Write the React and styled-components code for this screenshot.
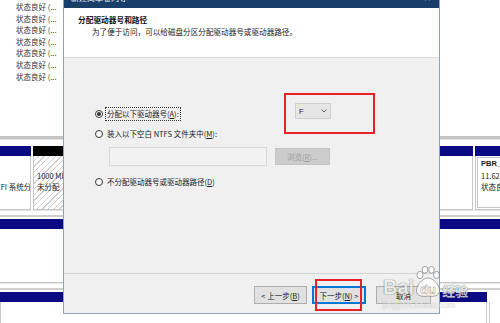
import React from 'react'
import styled, { createGlobalStyle } from 'styled-components'

const NAVY = '#0a0a82'

const GlobalStyle = createGlobalStyle`
  html, body { margin: 0; padding: 0; background: #fff; }
  body { font-family: "Noto Sans CJK SC", "Noto Sans", sans-serif; }
`

const Screen = styled.div`
  position: relative;
  width: 500px;
  height: 323px;
  overflow: hidden;
  background: #fff;
  font-family: "Noto Sans CJK SC", "Liberation Sans", sans-serif;
  font-size: 7.5px;
  color: #222;
`

/* disk management window behind the wizard */
const Backdrop = styled.div`
  display: flex;
  flex-direction: column;
  & > * { flex-shrink: 0; }
`

const VolumeList = styled.div`
  box-sizing: border-box;
  height: 136px;
  padding: 1px 0 0 16px;
  display: flex;
  flex-direction: column;
`

const StatusCell = styled.div`
  height: 11.6px;
  line-height: 11.6px;
  white-space: nowrap;
  color: #333;
`

const Splitter = styled.div`
  height: 3px;
  background: #c4c4c4;
  border-bottom: 1px solid #e2e2e2;
  margin-bottom: 6px;
`

const DiskRow = styled.div`
  display: flex;
  gap: 2px;
  height: 64px;
  overflow: hidden;
`

const DiskGap = styled.div`
  height: ${p => p.h}px;
  background: #fff;
  border-top: 1px solid #e4e4e4;
  border-bottom: 2px solid #d0d0d0;
  box-sizing: border-box;
  margin-bottom: 2px;
`

const Partition = styled.div`
  flex: 0 0 ${p => p.w}px;
  margin-left: ${p => p.offset || 0}px;
  display: flex;
  flex-direction: column;
  min-width: 0;
`

const PartHeader = styled.div`
  height: 10px;
  background: ${p => p.color};
`

const PartBody = styled.div`
  flex: 1;
  box-sizing: border-box;
  overflow: hidden;
  padding: 2px 3px;
  border: 1px solid #c6c6c6;
  border-top: none;
  background: ${p => p.hatched
    ? 'repeating-linear-gradient(135deg, #fff 0 3px, #cfcfcf 3px 4px)'
    : '#fff'};
  box-shadow: ${p => p.framed ? 'inset 0 0 0 1px #fff, inset 0 0 0 2px #c6c6c6' : 'none'};
  padding-left: ${p => p.framed ? 5 : 3}px;
`

const PartLine = styled.div`
  height: 11.5px;
  line-height: 11.5px;
  white-space: nowrap;
  font-weight: ${p => p.bold ? 700 : 400};
  font-family: ${p => p.bold ? '"Liberation Sans", sans-serif' : 'inherit'};
  color: #222;
`

/* wizard dialog */
const Dialog = styled.section`
  position: absolute;
  left: 63px;
  top: -14px;
  width: 377px;
  height: 328px;
  box-sizing: border-box;
  border: 1px solid #8ea2b8;
  background: #f0f0f0;
  display: flex;
  flex-direction: column;
`

const TitleBar = styled.div`
  height: 21px;
  flex-shrink: 0;
  background: #183f6a;
  color: #fff;
  display: flex;
  align-items: flex-end;
  justify-content: space-between;
  padding: 0 8px 5px 7px;
  box-sizing: border-box;
  font-size: 8px;
  line-height: 10px;
`

const Header = styled.div`
  height: 50px;
  flex-shrink: 0;
  box-sizing: border-box;
  background: #fff;
  border-bottom: 1px solid #dadada;
  padding: 6px 0 0 14px;
`

const Heading = styled.div`
  font-weight: 700;
  font-size: 7.7px;
  line-height: 12px;
  color: #111;
`

const Subtitle = styled.div`
  font-size: 7.6px;
  line-height: 12px;
  padding-left: 14px;
  color: #222;
`

const Body = styled.div`
  flex: 1;
  padding: 49px 0 0 31px;
  display: flex;
  flex-direction: column;
`

const OptionRow = styled.div`
  display: grid;
  grid-template-columns: 200px auto;
  align-items: center;
  height: 14px;
  margin-top: ${p => p.gap || 0}px;
`

const Choice = styled.label`
  display: flex;
  align-items: center;
  gap: 2px;
  white-space: nowrap;
`

const Radio = styled.span`
  width: 8px;
  height: 8px;
  box-sizing: border-box;
  border-radius: 50%;
  border: 1px solid #333;
  background: #fff;
  display: grid;
  place-items: center;
  &::after {
    content: '';
    width: 4px;
    height: 4px;
    border-radius: 50%;
    background: ${p => p.checked ? '#333' : 'transparent'};
  }
`

const Label = styled.span`
  padding: 1px 1px;
  line-height: 10px;
  border: 1px dotted ${p => p.focused ? '#333' : 'transparent'};
`

const Select = styled.div`
  align-self: start;
  margin-top: -4px;
  width: 36px;
  height: 16px;
  box-sizing: border-box;
  border: 1px solid #cfcfcf;
  background: #e6e6e6;
  display: flex;
  align-items: center;
  justify-content: space-between;
  padding: 0 3px;
  font-family: "Liberation Sans", sans-serif;
  font-size: 7.5px;
  color: #222;
`

const PathRow = styled.div`
  display: flex;
  align-items: center;
  gap: 8px;
  margin: 6px 0 0 14px;
`

const PathInput = styled.div`
  width: 158px;
  height: 19px;
  box-sizing: border-box;
  border: 1px solid #d8d8d8;
  background: #f2f2f2;
`

const Browse = styled.div`
  width: 55px;
  height: 17px;
  box-sizing: border-box;
  border: 1px solid #c4c4c4;
  background: #cccccc;
  color: #9c9c9c;
  display: grid;
  place-items: center;
  font-size: 7.5px;
`

const Footer = styled.div`
  height: 40px;
  flex-shrink: 0;
  box-sizing: border-box;
  border-top: 1px solid #d4d4d4;
  display: flex;
  justify-content: flex-end;
  align-items: flex-start;
  padding: 12px 8px 0 0;
`

const Button = styled.div`
  width: ${p => p.w}px;
  height: 18px;
  margin-left: ${p => p.gap || 0}px;
  box-sizing: border-box;
  border: 1px solid ${p => p.primary ? '#0078d7' : '#adadad'};
  box-shadow: ${p => p.primary ? 'inset 0 0 0 1px #0078d7' : 'none'};
  background: #e1e1e1;
  display: grid;
  place-items: center;
  font-size: 7.5px;
  color: #222;
  white-space: nowrap;
`

/* screenshot annotations and watermark */
const Marker = styled.div`
  position: absolute;
  left: ${p => p.x}px;
  top: ${p => p.y}px;
  width: ${p => p.w}px;
  height: ${p => p.h}px;
  box-sizing: border-box;
  border: 2px solid #e8202a;
`

const Watermark = styled.div`
  position: absolute;
  left: 383px;
  top: 266px;
  opacity: 0.8;
  pointer-events: none;
`

const Brand = styled.div`
  display: flex;
  align-items: flex-end;
`

const BrandText = styled.span`
  font-family: ${p => p.cjk ? '"Noto Sans CJK SC", sans-serif' : '"Liberation Sans", sans-serif'};
  font-weight: 700;
  font-size: ${p => p.size}px;
  line-height: 1;
  color: rgba(255, 255, 255, 0.92);
  text-shadow: 0 0 1px rgba(80, 80, 80, 0.9), 0 0 1px rgba(80, 80, 80, 0.9);
  margin-bottom: 1px;
`

const BrandUrl = styled.div`
  font-family: "Liberation Sans", sans-serif;
  font-size: 9px;
  line-height: 10px;
  margin-top: 2px;
  color: rgba(255, 255, 255, 0.7);
  text-shadow: 0 0 1px rgba(120, 120, 120, 0.6);
`

const Paw = () => (
  <svg width="28" height="32" viewBox="0 0 28 32">
    <g fill="rgba(255,255,255,0.9)" stroke="rgba(90,90,90,0.8)" strokeWidth="0.8">
      <ellipse cx="6" cy="9" rx="3" ry="3.6" />
      <ellipse cx="11" cy="3.8" rx="2.8" ry="3.4" />
      <ellipse cx="17.5" cy="3.8" rx="2.8" ry="3.4" />
      <ellipse cx="22.5" cy="9" rx="3" ry="3.6" />
      <path d="M14 12 C 8 12 2 20 2.5 25 C 3 30 8 31 14 30 C 20 31 25 30 25.5 25 C 26 20 20 12 14 12 Z" />
    </g>
    <text x="14" y="28" textAnchor="middle" fontFamily="Liberation Sans, sans-serif" fontWeight="700"
      fontSize="13" fill="rgba(255,255,255,0.95)" stroke="rgba(90,90,90,0.7)" strokeWidth="0.5">du</text>
  </svg>
)

const Chevron = () => (
  <svg width="6" height="4" viewBox="0 0 6 4">
    <polyline points="0.5,0.5 3,3 5.5,0.5" fill="none" stroke="#555" strokeWidth="0.9" />
  </svg>
)

const statuses = Array.from({ length: 7 }, () => '状态良好 (...')

const diskRows = [
  [
    { w: 73, offset: -42, color: NAVY, lines: ['', '100 MB', '状态良好 (EFI 系统分区)'] },
    { w: 120, color: '#000', hatched: true, lines: ['', '1000 MB', '未分配'] },
    { w: 318, color: NAVY, lines: [] },
    { w: 60, color: NAVY, framed: true, lines: ['PBR_Image', '11.62 GB NTFS', '状态良好 (OEM 分区)'] },
  ],
  [
    { w: 560, offset: -30, color: NAVY, lines: [] },
  ],
  [
    { w: 487, color: NAVY, lines: [] },
    { w: 40, color: '#fff', lines: [] },
  ],
]

const DiskPartitions = ({ parts }) => (
  <DiskRow>
    {parts.map((p, i) => (
      <Partition key={i} w={p.w} offset={p.offset}>
        <PartHeader color={p.color} />
        <PartBody hatched={p.hatched} framed={p.framed}>
          {p.lines.map((l, j) => <PartLine key={j} bold={j === 0}>{l}</PartLine>)}
        </PartBody>
      </Partition>
    ))}
  </DiskRow>
)

export default function App() {
  return (
    <Screen>
      <GlobalStyle />
      <Backdrop>
        <VolumeList>
          {statuses.map((s, i) => <StatusCell key={i}>{s}</StatusCell>)}
        </VolumeList>
        <Splitter />
        <DiskPartitions parts={diskRows[0]} />
        <DiskGap h={7} />
        <DiskPartitions parts={diskRows[1]} />
        <DiskGap h={7} />
        <DiskPartitions parts={diskRows[2]} />
      </Backdrop>

      <Dialog>
        <TitleBar>
          <span>新建简单卷向导</span>
          <span>✕</span>
        </TitleBar>
        <Header>
          <Heading>分配驱动器号和路径</Heading>
          <Subtitle>为了便于访问，可以给磁盘分区分配驱动器号或驱动器路径。</Subtitle>
        </Header>
        <Body>
          <OptionRow>
            <Choice>
              <Radio checked />
              <Label focused>分配以下驱动器号(<u>A</u>):</Label>
            </Choice>
            <Select>
              <span>F</span>
              <Chevron />
            </Select>
          </OptionRow>
          <OptionRow gap={6}>
            <Choice>
              <Radio />
              <Label>装入以下空白 NTFS 文件夹中(<u>M</u>):</Label>
            </Choice>
          </OptionRow>
          <PathRow>
            <PathInput />
            <Browse><span>浏览(<u>R</u>)...</span></Browse>
          </PathRow>
          <OptionRow gap={9}>
            <Choice>
              <Radio />
              <Label>不分配驱动器号或驱动器路径(<u>D</u>)</Label>
            </Choice>
          </OptionRow>
        </Body>
        <Footer>
          <Button w={53}><span>&lt; 上一步(<u>B</u>)</span></Button>
          <Button w={54} gap={5} primary><span>下一步(<u>N</u>) &gt;</span></Button>
          <Button w={55} gap={10}><span>取消</span></Button>
        </Footer>
      </Dialog>

      <Marker x={284} y={93} w={91} h={41} />
      <Marker x={315} y={279} w={47} h={32} />

      <Watermark>
        <Brand>
          <BrandText size={20}>Bai</BrandText>
          <Paw />
          <BrandText size={13} cjk>经验</BrandText>
        </Brand>
        <BrandUrl>jingyan.baidu.com</BrandUrl>
      </Watermark>
    </Screen>
  )
}
